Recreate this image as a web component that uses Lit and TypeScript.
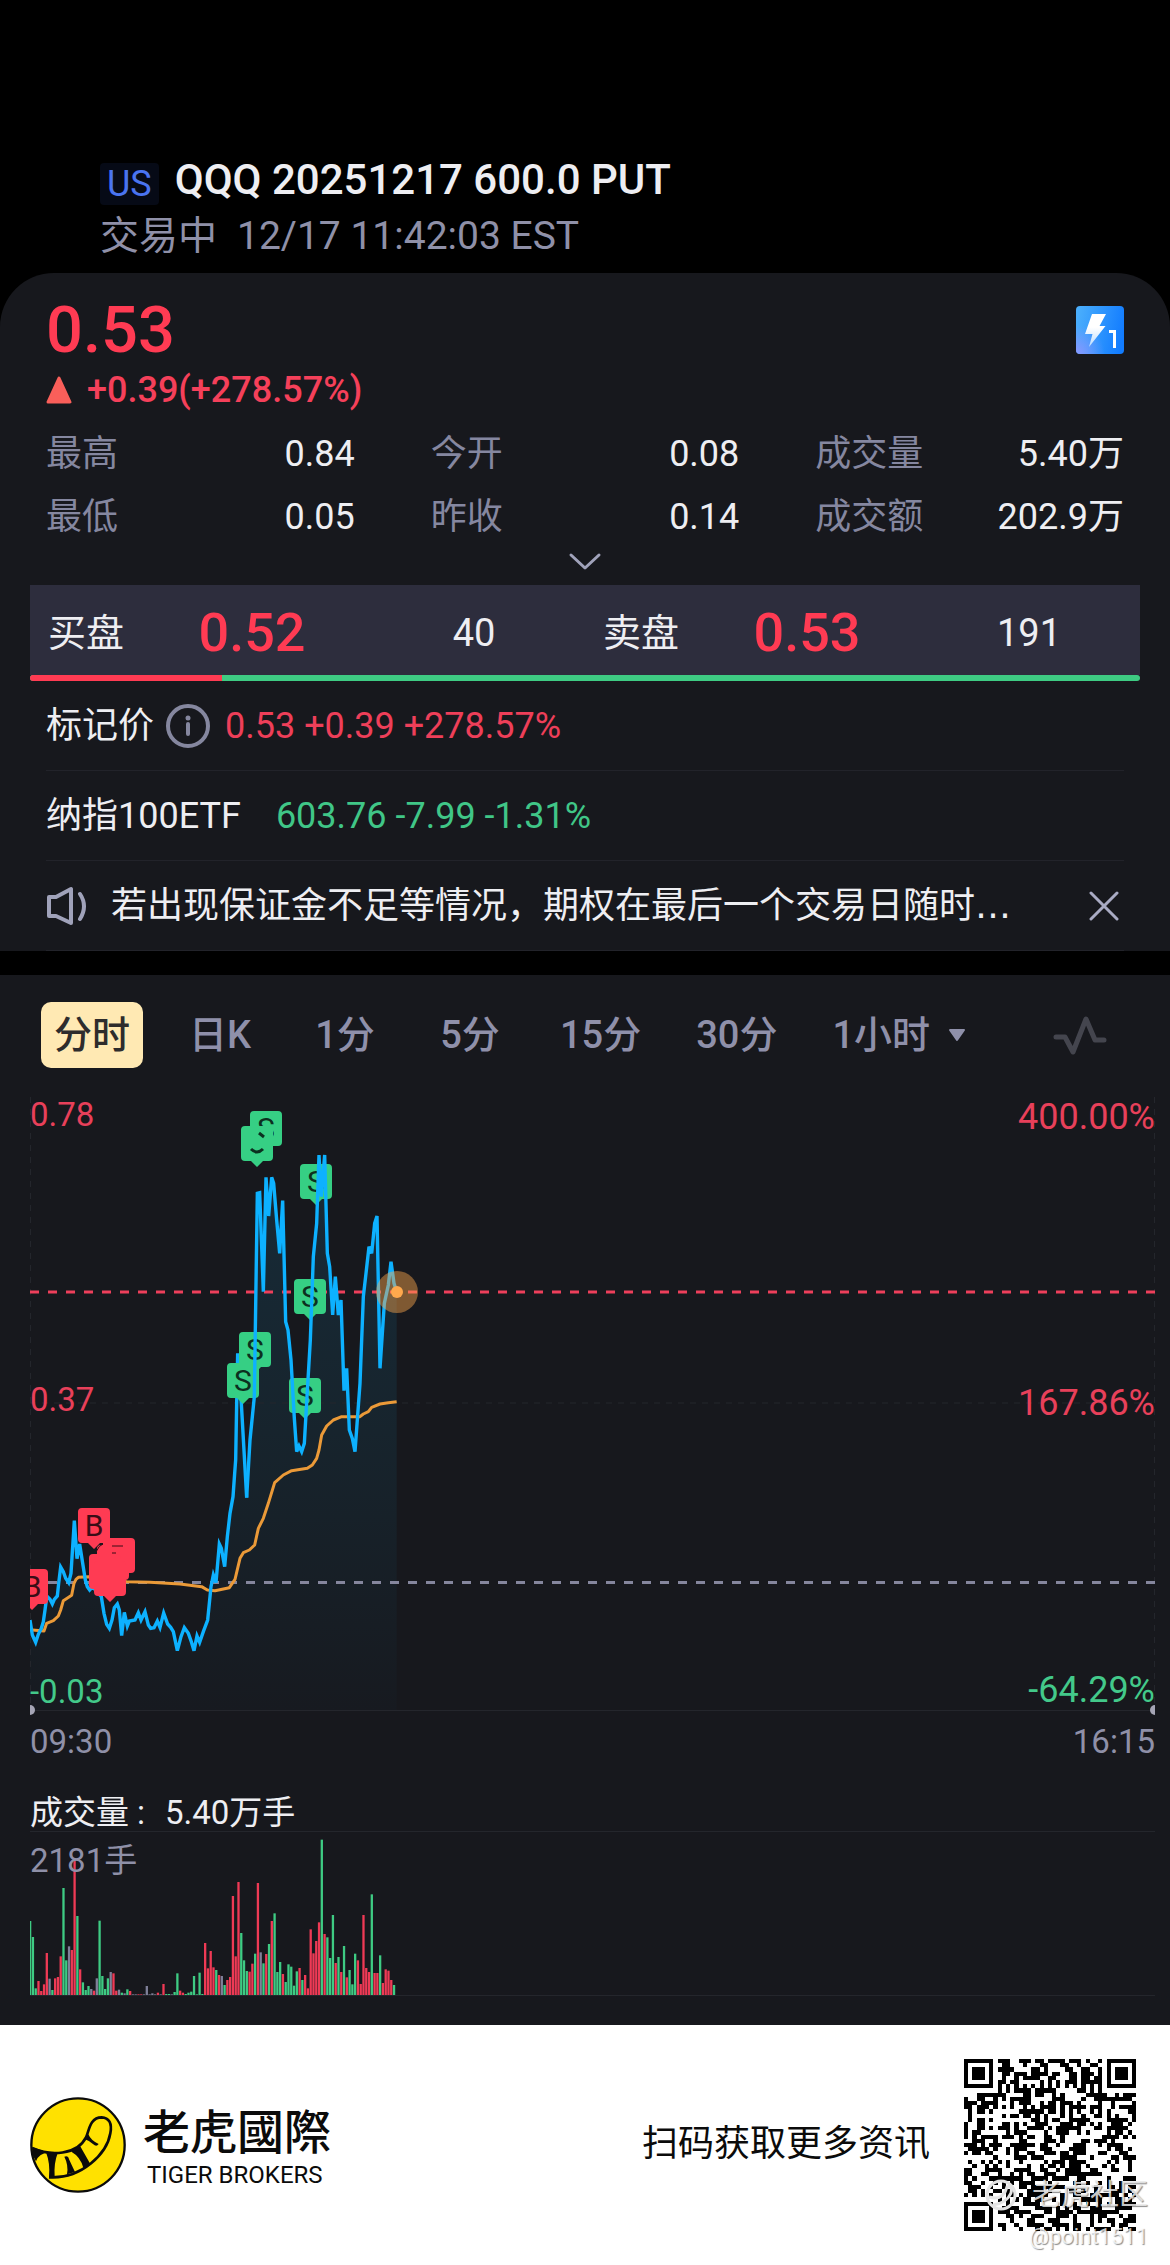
import { LitElement, html, svg, css } from "lit";
import { customElement, state } from "lit/decorators.js";
import { classMap } from "lit/directives/class-map.js";

type Pt = [number, number];

const toPath = (pts: Pt[]) => "M" + pts.map(([x, y]) => `${x / 3} ${y / 3}`).join("L");

/* Price line, in thirds of a chart unit. */
const PRICE_EARLY: Pt[] = [
  [90, 4860], [97, 4905], [107, 4927], [115, 4903], [124, 4885], [130, 4865], [135, 4830], [139, 4800],
  [143, 4791], [150, 4798], [157, 4812], [163, 4798], [172, 4788], [176, 4750], [182, 4701], [190, 4715],
  [197, 4735], [206, 4748], [213, 4720], [223, 4562], [231, 4676], [239, 4632], [248, 4690], [256, 4740],
  [262, 4760], [269, 4770], [278, 4760], [290, 4775], [304, 4790], [312, 4840], [320, 4873], [328, 4885],
  [336, 4860], [343, 4823], [352, 4812], [358, 4830], [365, 4907], [373, 4837], [382, 4878], [388, 4863],
  [405, 4860], [415, 4838], [423, 4860], [435, 4835], [445, 4875], [452, 4885], [462, 4883], [472, 4863],
  [480, 4882], [491, 4839], [503, 4872], [512, 4882], [520, 4895], [532, 4952], [543, 4910], [553, 4883],
  [565, 4900], [574, 4925], [582, 4952], [591, 4908], [599, 4927], [610, 4895], [623, 4860], [633, 4760],
  [640, 4725], [648, 4748], [658, 4632], [664, 4645], [674, 4700], [682, 4610], [690, 4540], [699, 4490],
  [704, 4420], [707, 4380], [710, 4210], [713, 4060], [724, 4210], [740, 4493],
];
const PRICE_LATE: Pt[] = [
  [740, 4493], [750, 4320], [763, 4190], [772, 3580], [779, 3578], [790, 3875], [798, 3532], [806, 3648],
  [815, 3532], [821, 3550], [830, 3660], [839, 3760], [848, 3602], [857, 3965], [864, 3990], [873, 4080],
  [883, 4255], [890, 4355], [897, 4338], [905, 4355], [913, 4330], [921, 4190], [931, 4020], [940, 3770],
  [950, 3670], [957, 3465], [964, 3590], [974, 3465], [982, 3760], [989, 3800], [998, 3945], [1006, 3830],
  [1015, 3945], [1023, 3900], [1032, 4172], [1040, 4105], [1048, 4290], [1057, 4315], [1065, 4355],
  [1080, 4150], [1090, 3890], [1098, 3820], [1107, 3740], [1115, 3760], [1124, 3670], [1131, 3648],
  [1140, 4105], [1153, 3910], [1165, 3855], [1173, 3785], [1182, 3850], [1190, 3875],
];
const AVERAGE: Pt[] = [
  [97, 4890], [132, 4893], [140, 4870], [160, 4862], [175, 4848], [182, 4830], [190, 4802], [215, 4786],
  [222, 4750], [228, 4738], [235, 4732], [265, 4730], [380, 4745], [450, 4747], [540, 4752], [605, 4760],
  [622, 4770], [645, 4772], [688, 4763], [705, 4738], [720, 4675], [730, 4658], [748, 4650], [764, 4635],
  [775, 4585], [790, 4555], [805, 4510], [824, 4448], [850, 4425], [875, 4412], [922, 4405], [937, 4395],
  [950, 4375], [957, 4350], [965, 4305], [980, 4278], [1000, 4260], [1025, 4250], [1080, 4250],
  [1090, 4242], [1105, 4235], [1115, 4222], [1140, 4212], [1165, 4208], [1190, 4205],
];

const SELLS: Pt[] = [[250, 1111], [241, 1126], [300, 1164], [294, 1279], [239, 1332], [227, 1363], [289, 1378]];

/* One entry per minute: side (r up, g down, n flat) and bar height in thirds of a unit. */
const VOLUME =
  "g222 g174 g20 r42 r12 r32 r126 n49 g15 r50 r54 r116 g321 g104 n146 r135 r405 g237 r77 g38 g15 g27 n18 r13 " +
  "n50 g223 g57 g18 g50 n69 r65 r13 n16 g7 n5 g17 r12 n2 n2 r2 r2 n2 n27 n2 n5 n2 r7 n2 r33 g3 g3 n2 g9 g65 " +
  "r13 r7 g3 g7 g10 g57 g2 g67 g3 r156 r80 r132 r83 g75 r60 n57 g30 r45 r54 r297 r116 r339 g186 g104 g72 r70 " +
  "r94 g124 r336 n128 g95 r123 g153 r222 g245 g69 g99 r63 g39 g92 g85 g28 g71 r81 g45 r60 r20 r197 r125 r162 " +
  "r218 g466 r183 g173 g111 g240 r96 g114 r69 g147 r53 g75 g32 g124 r104 r33 r240 r81 r69 g302 r66 r66 g119 " +
  "r36 r77 r73 r45 g30";

const BAR_COLORS: Record<string, string> = { r: "#ef3a55", g: "#3ecb83", n: "#7f8099" };

const QR_SIZE = 41;

function qrModules(): Pt[] {
  const finder = (x: number, y: number) => {
    const d = Math.max(Math.abs(x - 3), Math.abs(y - 3));
    return d === 3 || d <= 1;
  };
  let seed = 20251217;
  const next = () => {
    seed = (Math.imul(seed, 1664525) + 1013904223) >>> 0;
    return seed / 4294967296;
  };
  const out: Pt[] = [];
  for (let y = 0; y < QR_SIZE; y++) {
    for (let x = 0; x < QR_SIZE; x++) {
      const noise = next() < 0.5;
      const far = QR_SIZE - 8;
      let on = noise;
      if (x < 8 && y < 8) on = x < 7 && y < 7 && finder(x, y);
      else if (x >= far && y < 8) on = x > far && y < 7 && finder(x - far - 1, y);
      else if (x < 8 && y >= far) on = x < 7 && y > far && finder(x, y - far - 1);
      else if (x === 6 || y === 6) on = (x + y) % 2 === 0;
      else {
        const d = Math.max(Math.abs(x - 34), Math.abs(y - 34));
        if (d <= 2) on = d !== 1;
      }
      if (on) out.push([x, y]);
    }
  }
  return out;
}

const sans = css`"Roboto", "Noto Sans CJK SC", sans-serif`;

const reset = css`
  :host { display: block; }
  * { box-sizing: border-box; }
  svg { display: block; flex: none; }
  button, select {
    margin: 0; padding: 0; border: 0; background: none; color: inherit;
    font: inherit; cursor: pointer; appearance: none;
  }
`;

@customElement("price-chart")
class PriceChart extends LitElement {
  static styles = [reset, css`
    .chart { width: 100%; height: auto; }
    text { font-family: ${sans}; font-size: 33px; }
    .pct { font-size: 36px; text-anchor: end; }
    .end { text-anchor: end; }
    .up { fill: #e8405a; }
    .down { fill: #43c98a; }
    .time { fill: #8f90a8; }
    .grid { stroke: #24262c; stroke-width: 1; }
    .tag { font-size: 30px; text-anchor: middle; }
    .sell { fill: #36cf84; }
    .sell-text { fill: #0c3020; }
    .buy { fill: #ff3b53; }
    .buy-text { fill: #3a0d17; }
    .price { fill: none; stroke: #0db1ff; stroke-width: 3.4; }
    .average { fill: none; stroke: #eb9a38; stroke-width: 3; stroke-linejoin: round; }
  `];

  private tag([x, y]: Pt, kind: string, label: string) {
    return svg`
      <path class=${kind} d=${`M${x + 4} ${y}h24q4 0 4 4v27q0 4 -4 4h-6l-6 6l-6 -6h-6q-4 0 -4 -4v-27q0 -4 4 -4z`}></path>
      ${label ? svg`<text class="tag ${kind}-text" x=${x + 16} y=${y + 28}>${label}</text>` : null}`;
  }

  render() {
    const area = toPath([...PRICE_EARLY, ...PRICE_LATE, [1190, 5131], [90, 5131]]) + "Z";
    return html`
      <svg class="chart" viewBox="0 1068 1170 702" role="img" aria-label="分时">
        <defs>
          <linearGradient id="fade" gradientUnits="userSpaceOnUse" x1="0" y1="1155" x2="0" y2="1710">
            <stop offset="0" stop-color="#172b38"></stop>
            <stop offset="0.5" stop-color="#17242d"></stop>
            <stop offset="1" stop-color="#171a20"></stop>
          </linearGradient>
          <clipPath id="plot"><rect x="30" y="1068" width="1125" height="660"></rect></clipPath>
        </defs>
        <g clip-path="url(#plot)">
          <path d=${area} fill="url(#fade)"></path>
          <path class="grid" d="M30 1403H1155M30.500 1097V1710M1154.500 1097V1710" stroke-dasharray="6 6"></path>
          <path class="grid" d="M30 1710.500H1155"></path>
          <path d="M30 1582.500H1155" stroke="#85869d" stroke-width="3" stroke-dasharray="9 9"></path>
          <path d="M30 1292H1155" stroke="#ee3f5b" stroke-width="3" stroke-dasharray="9 9"></path>
          <path class="average" d=${toPath(AVERAGE)}></path>
          <path class="price" d=${toPath(PRICE_EARLY)}></path>
          ${SELLS.slice(2).map((p) => this.tag(p, "sell", "S"))}
          ${this.tag(SELLS[0], "sell", "S")}
          ${this.tag(SELLS[1], "sell", "")}
          <path d="M251 1149q6 6 12 0M259 1133l5 4" fill="none" stroke="#0c3020" stroke-width="3"></path>
          ${this.tag([16, 1569], "buy", "B")}
          ${this.tag([78, 1508], "buy", "B")}
          ${this.tag([103, 1538], "buy", "")}
          ${this.tag([97, 1545], "buy", "")}
          ${this.tag([89, 1554], "buy", "")}
          ${this.tag([94, 1561], "buy", "")}
          <path d="M96 1552q3 -7 7 -8M112 1546h11M112 1553h4" fill="none" stroke="#3a0d17" stroke-width="1"></path>
          <path class="price" d=${toPath(PRICE_LATE)}></path>
          <circle cx="30" cy="1710" r="5" fill="#a5a5b5"></circle>
          <circle cx="1155" cy="1710" r="5" fill="#a5a5b5"></circle>
        </g>
        <circle cx="397" cy="1292" r="21" fill="#ffa94d" fill-opacity="0.45"></circle>
        <circle cx="397" cy="1292" r="6" fill="#ffa94d"></circle>
        <text class="up" x="30" y="1126">0.78</text>
        <text class="up" x="30" y="1411">0.37</text>
        <text class="down" x="30" y="1703">-0.03</text>
        <text class="pct up" x="1155" y="1129">400.00%</text>
        <text class="pct up" x="1155" y="1415">167.86%</text>
        <text class="pct down" x="1155" y="1702">-64.29%</text>
        <text class="time" x="30" y="1753">09:30</text>
        <text class="time end" x="1155" y="1753">16:15</text>
      </svg>`;
  }
}

@customElement("volume-chart")
class VolumeChart extends LitElement {
  static styles = [reset, css`
    .chart { width: 100%; height: auto; }
    text { font-family: ${sans}; font-size: 33px; fill: #eeeef2; }
    .max { fill: #8f90a8; }
    .grid { stroke: #24262c; stroke-width: 1; }
  `];

  render() {
    return html`
      <svg class="chart" viewBox="0 1770 1170 255" role="img" aria-label="成交量">
        <path class="grid" d="M30 1831.500H1155M30 1995.500H1155"></path>
        ${VOLUME.split(" ").map((bar, i) => {
          const h = Number(bar.slice(1)) / 3;
          return svg`<rect x=${Math.max(30, 29 + (i * 25) / 9)} y=${1995 - h} width=${i ? 2.3 : 1.3} height=${h} fill=${BAR_COLORS[bar[0]]}></rect>`;
        })}
        <text x="30" y="1824">成交量</text>
        <text x="137" y="1824">:</text>
        <text x="165" y="1824">5.40万手</text>
        <text class="max" x="30" y="1872">2181手</text>
      </svg>`;
  }
}

@customElement("share-footer")
class ShareFooter extends LitElement {
  static styles = [reset, css`
    .footer {
      display: flex; align-items: center; min-height: 240px; padding: 0 34px 0 30px;
      background: #fff; color: #0b0b0b; font-family: ${sans};
    }
    .brand { margin: 6px 0 0 17px; display: flex; flex-direction: column; gap: 2px; }
    .name { font: 500 47px/52px "Roboto", "Noto Sans CJK TC", sans-serif; }
    .latin { padding-left: 4px; font-size: 24px; line-height: 28px; }
    .hint { margin: 0 34px 2px auto; font-size: 36px; line-height: 44px; }
    .code { position: relative; }
    .mark {
      position: absolute; top: 118px; right: -12px; text-align: right; white-space: nowrap;
      color: rgba(255, 255, 255, 0.8); text-shadow: 1px 1px 1px rgba(0, 0, 0, 0.45);
    }
    .community {
      display: flex; align-items: center; justify-content: flex-end; gap: 15px;
      font-size: 29px; line-height: 36px; color: rgba(235, 235, 235, 0.85);
    }
    .user { font-size: 22px; line-height: 36px; padding-top: 6px; }
  `];

  render() {
    return html`
      <footer class="footer">
        <svg width="96" height="96" viewBox="89 81 288 288" aria-hidden="true">
          <circle cx="233" cy="225" r="140" fill="#ffe100" stroke="#0b0b0b" stroke-width="7"></circle>
          <path d="M97 235C150 258 230 256 257 202C266 184 268 142 304 142C326 143 336 160 330 190C320 250 245 328 146 322" fill="none" stroke="#0b0b0b" stroke-width="8"></path>
          <path d="M95 231L146 248Q116 248 107 274L97 255ZM137 247L172 250Q160 280 163 321L146 321Q150 280 137 247ZM192 260Q204 256 206 268L224 306L200 313Q205 285 192 260ZM213 245L238 226L270 282L249 293Q240 260 213 245ZM254 208L264 193Q272 212 295 222Q290 230 283 226Q268 212 254 208Z" fill="#0b0b0b"></path>
        </svg>
        <div class="brand">
          <span class="name">老虎國際</span>
          <span class="latin">TIGER BROKERS</span>
        </div>
        <p class="hint">扫码获取更多资讯</p>
        <div class="code">
          <svg width="172" height="172" viewBox="0 0 41 41" shape-rendering="crispEdges" role="img" aria-label="二维码">
            <path d=${qrModules().map(([x, y]) => `M${x} ${y}h1v1h-1z`).join("")} fill="#000"></path>
          </svg>
          <div class="mark">
            <div class="community">
              <svg width="32" height="32" viewBox="0 0 32 32" aria-hidden="true">
                <circle cx="16" cy="16" r="14" fill="none" stroke="#e4e4e4" stroke-width="3"></circle>
                <path d="M4 18Q18 22 22 8Q28 6 26 14Q22 24 8 26" fill="none" stroke="#e4e4e4" stroke-width="3"></path>
              </svg>
              <span>老虎社区</span>
            </div>
            <div class="user">@point1511</div>
          </div>
        </div>
      </footer>`;
  }
}

@customElement("app-root")
class AppRoot extends LitElement {
  static styles = [reset, css`
    :host { background: #000; color: #eeeef2; font-family: ${sans}; }
    h1, h2, p, dl, dd, dt { margin: 0; font-weight: 400; }
    .header { padding: 155px 100px 15px; }
    .title { display: flex; align-items: flex-end; gap: 16px; }
    .market {
      padding: 0 7px; background: #060a16; border-radius: 4px;
      font-size: 36px; line-height: 42px; color: #4a74f0;
    }
    .symbol { font-size: 42px; line-height: 50px; font-weight: 500; }
    .status { display: flex; gap: 20px; padding-top: 9px; font-size: 39px; line-height: 44px; color: #8f90a8; }
    .card { background: #17181d; border-radius: 54px 54px 0 0; padding-top: 21px; }
    .summary { padding: 0 46px; display: flex; flex-direction: column; }
    .top { display: flex; align-items: center; justify-content: space-between; }
    .last { font-size: 65px; line-height: 72px; font-weight: 500; color: #ff3b53; }
    .change {
      display: flex; align-items: center; gap: 15px; padding-top: 2px;
      font-size: 36px; line-height: 44px; font-weight: 500; color: #f5405a;
    }
    .stats {
      display: grid; grid-template-columns: repeat(3, 1fr); gap: 19px 76px; padding-top: 20px;
      font-size: 36px; line-height: 44px;
    }
    .stat { display: flex; justify-content: space-between; white-space: nowrap; }
    .stat dt { color: #8587a0; }
    .more { display: flex; align-items: center; justify-content: center; height: 46px; }
    .book { margin: 0 30px; }
    .quotes { display: grid; grid-template-columns: 1fr 1fr; background: #2d2d3d; }
    .quote {
      display: grid; grid-template-columns: 1fr 2fr 2fr; padding-top: 6px;
      font-size: 38px; line-height: 84px; text-align: center; white-space: nowrap;
    }
    .side { padding-left: 18px; text-align: left; }
    .bid { font-size: 54px; font-weight: 500; color: #ff3b53; }
    .ratio { display: flex; height: 6px; border-radius: 3px; overflow: hidden; background: #3ecb83; }
    .ratio-bid { background: #ff3b53; }
    .rows { padding: 0 46px; font-size: 36px; line-height: 44px; }
    .row { display: flex; align-items: center; height: 90px; border-bottom: 1px solid #22232a; white-space: nowrap; }
    .info { display: flex; margin: 0 14px 0 11px; }
    .red { color: #ee3f59; }
    .green { color: #40c687; margin-left: 35px; }
    .notice { flex: 1; padding-left: 24px; overflow: hidden; text-overflow: ellipsis; }
    .dots { font-family: "DejaVu Sans", sans-serif; }
    .close { padding: 8px 5px; }
    .panel { margin-top: 24px; background: #17181d; }
    .tabs {
      display: flex; align-items: center; gap: 55px; padding: 27px 63px 0 54px;
      font-size: 38px; line-height: 66px; font-weight: 500; color: #8f90aa; white-space: nowrap;
    }
    .tab { min-width: 70px; }
    .tab.active {
      margin: 0 -13px; padding: 0 13px; border-radius: 10px; background: #ffe9b3; color: #2e2c2c;
    }
    .hour { display: flex; align-items: center; gap: 18px; }
    .indicator { margin-left: auto; }
  `];

  @state() private active = "分时";

  private stats = [
    ["最高", "0.84"], ["今开", "0.08"], ["成交量", "5.40万"],
    ["最低", "0.05"], ["昨收", "0.14"], ["成交额", "202.9万"],
  ];

  render() {
    return html`
      <header class="header">
        <div class="title"><span class="market">US</span><h1 class="symbol">QQQ 20251217 600.0 PUT</h1></div>
        <div class="status"><span>交易中</span><span>12/17 11:42:03 EST</span></div>
      </header>

      <main>
        <section class="card">
          <div class="summary">
            <div class="top">
              <span class="last">0.53</span>
              <svg width="48" height="48" viewBox="0 0 48 48" aria-hidden="true">
                <defs>
                  <linearGradient id="tile" x1="0" y1="0.300" x2="1" y2="0.500">
                    <stop offset="0" stop-color="#4aaefc"></stop>
                    <stop offset="1" stop-color="#127cff"></stop>
                  </linearGradient>
                  <radialGradient id="glow" cx="0" cy="1" r="0.600">
                    <stop offset="0" stop-color="#8a97ff"></stop>
                    <stop offset="1" stop-color="#8a97ff" stop-opacity="0"></stop>
                  </radialGradient>
                  <linearGradient id="bolt" x1="0" y1="0" x2="0" y2="1">
                    <stop offset="0.400" stop-color="#fff"></stop>
                    <stop offset="1" stop-color="#b9dcff"></stop>
                  </linearGradient>
                </defs>
                <rect width="48" height="48" rx="4" fill="url(#tile)"></rect>
                <rect width="48" height="48" rx="4" fill="url(#glow)"></rect>
                <path d="M16 8H30L23.500 20H29.500L13 41L16.500 28H9Z" fill="url(#bolt)"></path>
                <path d="M33 25.500H38.500V42" fill="none" stroke="#fff" stroke-width="3"></path>
              </svg>
            </div>
            <div class="change">
              <svg width="26" height="28" viewBox="0 0 26 28" aria-hidden="true">
                <path d="M13 2L24 26H2Z" fill="#fa5f5a" stroke="#fa5f5a" stroke-width="3" stroke-linejoin="round"></path>
              </svg>
              <span>+0.39(+278.57%)</span>
            </div>
            <dl class="stats">
              ${this.stats.map(([k, v]) => html`<div class="stat"><dt>${k}</dt><dd>${v}</dd></div>`)}
            </dl>
            <button class="more" aria-label="展开">
              <svg width="34" height="20" viewBox="0 0 34 20" aria-hidden="true">
                <path d="M3 3L17 16L31 3" fill="none" stroke="#a0a2ba" stroke-width="3" stroke-linecap="round" stroke-linejoin="round"></path>
              </svg>
            </button>
          </div>

          <div class="book">
            <div class="quotes">
              <div class="quote"><span class="side">买盘</span><span class="bid">0.52</span><span>40</span></div>
              <div class="quote"><span class="side">卖盘</span><span class="bid">0.53</span><span>191</span></div>
            </div>
            <div class="ratio"><div class="ratio-bid" style="width:${(40 / 231) * 100}%"></div></div>
          </div>

          <div class="rows">
            <div class="row">
              <span>标记价</span>
              <button class="info" aria-label="标记价">
                <svg width="46" height="46" viewBox="0 0 46 46" aria-hidden="true">
                  <circle cx="23" cy="23" r="20" fill="none" stroke="#85879f" stroke-width="4"></circle>
                  <circle cx="23" cy="15" r="2.500" fill="#85879f"></circle>
                  <path d="M23 21V31" stroke="#85879f" stroke-width="4" stroke-linecap="round"></path>
                </svg>
              </button>
              <span class="red">0.53 +0.39 +278.57%</span>
            </div>
            <div class="row"><span>纳指100ETF</span><span class="green">603.76 -7.99 -1.31%</span></div>
            <div class="row">
              <svg width="41" height="40" viewBox="0 0 41 40" aria-hidden="true">
                <path d="M3 11H10L25 3V37L10 30H3ZM34 8Q42 20 34 33" fill="none" stroke="#a0a2ba" stroke-width="4" stroke-linecap="round" stroke-linejoin="round"></path>
              </svg>
              <p class="notice">若出现保证金不足等情况，期权在最后一个交易日随时<span class="dots">…</span></p>
              <button class="close" aria-label="关闭">
                <svg width="30" height="30" viewBox="0 0 30 30" aria-hidden="true">
                  <path d="M2 2L28 28M28 2L2 28" stroke="#a9abc4" stroke-width="3" stroke-linecap="round"></path>
                </svg>
              </button>
            </div>
          </div>
        </section>

        <section class="panel">
          <nav class="tabs">
            ${["分时", "日K", "1分", "5分", "15分", "30分"].map((t) => html`
              <button class=${classMap({ tab: true, active: t === this.active })} @click=${() => (this.active = t)}>${t}</button>`)}
            <div class="hour">
              <select aria-label="周期"><option>1小时</option></select>
              <svg width="18" height="14" viewBox="0 0 18 14" aria-hidden="true">
                <path d="M2 2H16L9 12Z" fill="#8f90aa" stroke="#8f90aa" stroke-width="2" stroke-linejoin="round"></path>
              </svg>
            </div>
            <button class="indicator" aria-label="指标">
              <svg width="54" height="40" viewBox="0 0 54 40" aria-hidden="true">
                <path d="M3 22H12L20 37L33 4L42 25H51" fill="none" stroke="#44454e" stroke-width="5" stroke-linecap="round" stroke-linejoin="round"></path>
              </svg>
            </button>
          </nav>
          <price-chart></price-chart>
          <volume-chart></volume-chart>
        </section>
      </main>

      <share-footer></share-footer>`;
  }
}
